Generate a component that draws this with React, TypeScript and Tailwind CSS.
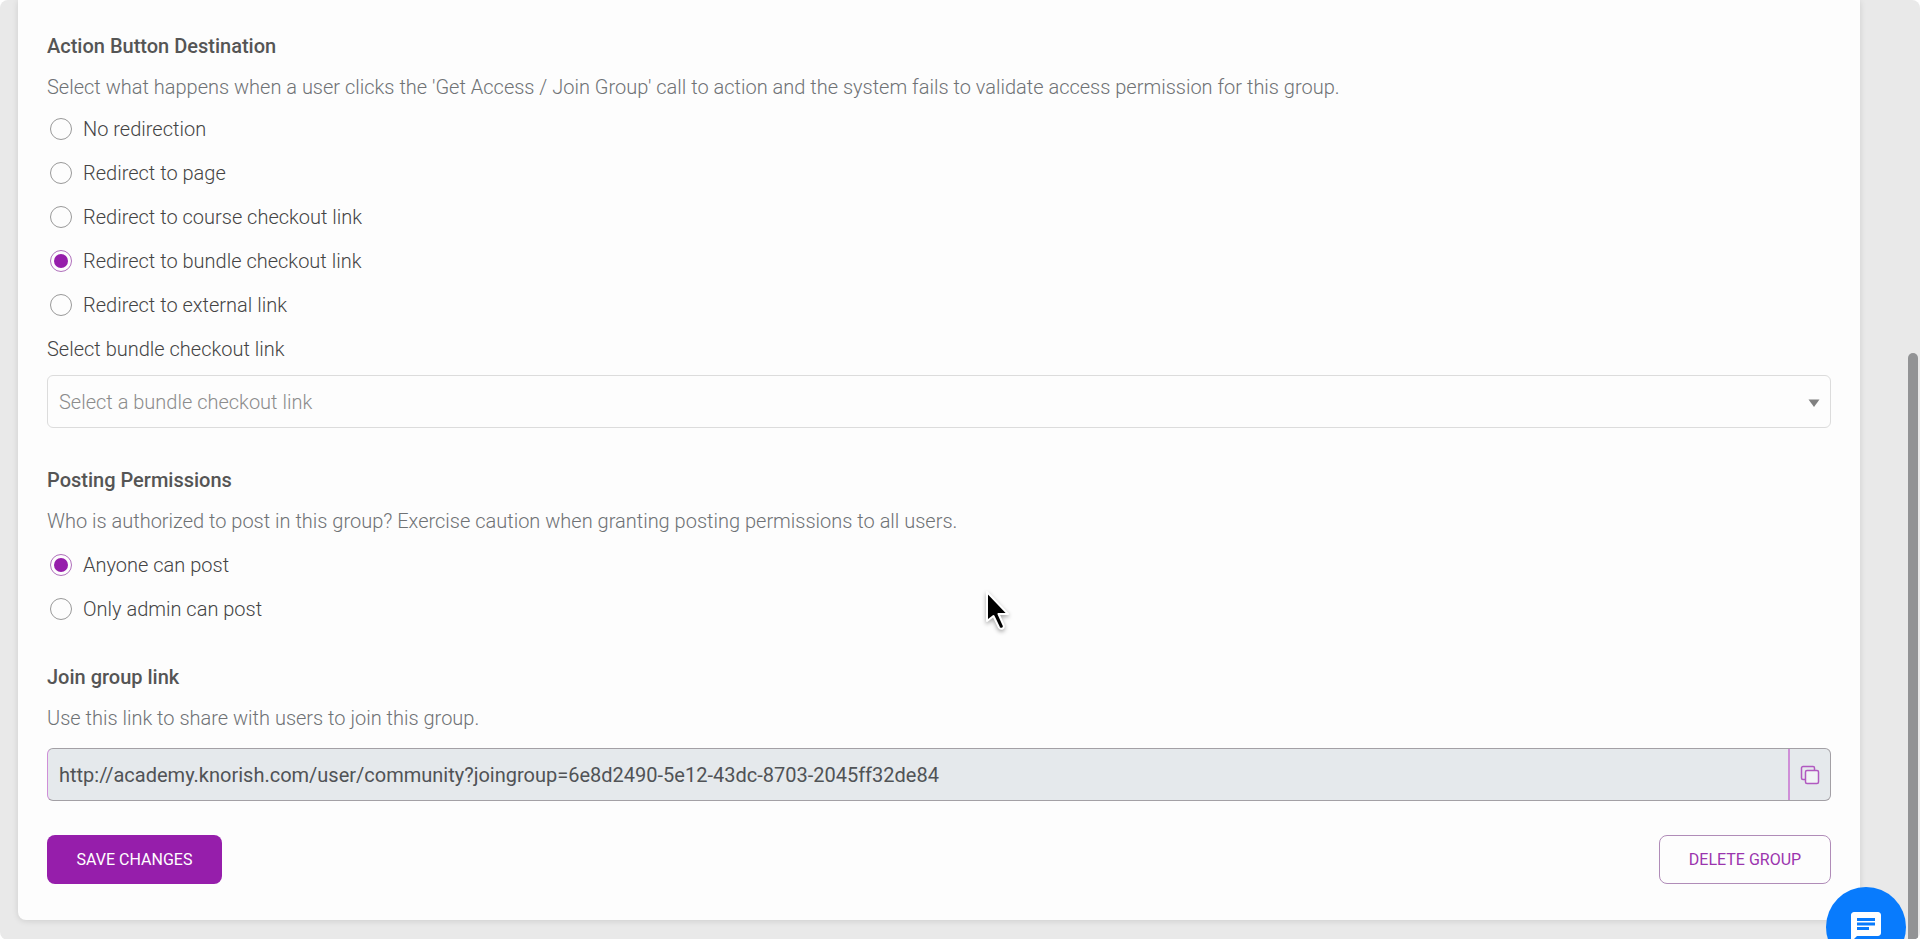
/**
 * GroupSettings page
 * Lower part of the community group form: button destination,
 * posting permissions and the join link
 */

import React, { useState } from 'react'
import { MdChat } from 'react-icons/md'

interface Option {
  value: string
  label: string
}

interface RadioListProps {
  name: string
  legend: string
  options: Option[]
  selected: string
  onSelect: (value: string) => void
}

const destinations: Option[] = [
  { value: 'none', label: 'No redirection' },
  { value: 'page', label: 'Redirect to page' },
  { value: 'course', label: 'Redirect to course checkout link' },
  { value: 'bundle', label: 'Redirect to bundle checkout link' },
  { value: 'external', label: 'Redirect to external link' }
]

const permissions: Option[] = [
  { value: 'anyone', label: 'Anyone can post' },
  { value: 'admin', label: 'Only admin can post' }
]

const joinLink =
  'http://academy.knorish.com/user/community?joingroup=6e8d2490-5e12-43dc-8703-2045ff32de84'

function SectionHeader({ title, text }: { title: string; text: string }) {
  return (
    <div className="space-y-[13px]">
      <h2 className="text-[20px] leading-7 font-medium text-[#555]">{title}</h2>
      <p className="text-[20px] leading-7 font-light text-[#6f7275]">{text}</p>
    </div>
  )
}

function RadioList({ name, legend, options, selected, onSelect }: RadioListProps) {
  return (
    <div role="radiogroup" aria-label={legend} className="flex flex-col items-start">
      {options.map((option) => (
        <label
          key={option.value}
          className="flex items-center gap-[11px] h-11 pl-[3px] text-[20px] leading-7 font-light text-[#444] cursor-pointer"
        >
          <input
            type="radio"
            name={name}
            value={option.value}
            checked={selected === option.value}
            onChange={() => onSelect(option.value)}
            className="appearance-none grid place-content-center size-[22px] rounded-full border border-[#999] checked:border-[#b070bc] before:size-[14px] before:rounded-full checked:before:bg-[#961eab]"
          />
          {option.label}
        </label>
      ))}
    </div>
  )
}

function CopyIcon() {
  return (
    <svg width="20" height="20" viewBox="0 0 20 20" fill="none" stroke="#b159c0" strokeWidth="1.5">
      <path d="M5.500 14.500H3A1.500 1.500 0 0 1 1.500 13V3A1.500 1.500 0 0 1 3 1.500H13A1.500 1.500 0 0 1 14.500 3V5.500" />
      <rect x="5.500" y="5.500" width="13" height="13" rx="1.500" fill="#f1f3f5" />
    </svg>
  )
}

function Pointer() {
  return (
    <svg
      className="absolute left-[982px] top-[587px] pointer-events-none drop-shadow-[0_2px_2px_rgba(0,0,0,0.35)]"
      width="32"
      height="46"
      viewBox="0 0 32 46"
    >
      <path
        d="M5 5V34L11.5 29L17 40.500Q18.500 42.500 20.500 41.500Q22.500 40.500 21.500 38L16.500 27H26Z"
        fill="#000"
        stroke="#fff"
        strokeWidth="2"
        strokeLinejoin="round"
      />
    </svg>
  )
}

export default function App() {
  const [destination, setDestination] = useState('bundle')
  const [permission, setPermission] = useState('anyone')

  const copyLink = () => {
    navigator.clipboard?.writeText(joinLink)
  }

  return (
    <div className="relative min-h-screen overflow-hidden rounded-lg bg-[#e9e9e9] pl-[18px] pr-[60px] pb-5 font-['Roboto',sans-serif]">
      <main className="bg-[#fdfdfd] rounded-b-lg shadow-[0_1px_6px_rgba(0,0,0,0.12)] px-[29px] pt-8 pb-9">
        {/* Action button destination */}
        <section>
          <SectionHeader
            title="Action Button Destination"
            text="Select what happens when a user clicks the 'Get Access / Join Group' call to action and the system fails to validate access permission for this group."
          />
          <div className="mt-1.5 mb-2">
            <RadioList
              name="destination"
              legend="Action Button Destination"
              options={destinations}
              selected={destination}
              onSelect={setDestination}
            />
          </div>
          <label htmlFor="bundle-link" className="block text-[20px] leading-7 font-light text-[#444]">
            Select bundle checkout link
          </label>
          <div className="relative mt-3">
            <select
              id="bundle-link"
              className="appearance-none block w-full h-[53px] px-[11px] rounded-md border border-[#dcdcdc] bg-transparent text-[20px] font-light text-[#8c8c8c]"
            >
              <option>Select a bundle checkout link</option>
            </select>
            <svg
              className="absolute right-[11px] top-6 pointer-events-none"
              width="12"
              height="8"
              viewBox="0 0 12 8"
            >
              <path d="M0.500 0.500H11.500L6 8Z" fill="#808080" />
            </svg>
          </div>
        </section>

        {/* Posting permissions */}
        <section className="mt-[38px]">
          <SectionHeader
            title="Posting Permissions"
            text="Who is authorized to post in this group? Exercise caution when granting posting permissions to all users."
          />
          <div className="mt-2">
            <RadioList
              name="permission"
              legend="Posting Permissions"
              options={permissions}
              selected={permission}
              onSelect={setPermission}
            />
          </div>
        </section>

        {/* Join link */}
        <section className="mt-8">
          <SectionHeader title="Join group link" text="Use this link to share with users to join this group." />
          <div className="mt-4 flex h-[53px] rounded-md border border-[#a3a0a5] border-l-[#cf8fd8] bg-[#e5e9ec] overflow-hidden">
            <input
              type="text"
              readOnly
              aria-label="Join group link"
              value={joinLink}
              className="flex-1 min-w-0 px-[11px] bg-transparent text-[20px] text-[#505356] outline-none"
            />
            <button
              type="button"
              aria-label="Copy link"
              onClick={copyLink}
              className="grid place-items-center w-[42px] border-l-2 border-[#cf8fd8]"
            >
              <CopyIcon />
            </button>
          </div>
        </section>

        {/* Form actions */}
        <div className="mt-[34px] flex justify-between">
          <button
            type="button"
            className="h-[49px] w-[175px] rounded-lg bg-[#961eab] text-[16px] text-white"
          >
            SAVE CHANGES
          </button>
          <button
            type="button"
            className="h-[49px] w-[172px] rounded-lg border border-[#b08cb8] text-[16px] text-[#9b35ae]"
          >
            DELETE GROUP
          </button>
        </div>
      </main>

      {/* Scroll thumb */}
      <div className="absolute right-[2px] top-[353px] bottom-0 w-[10px] rounded-t-full bg-[#929395]" />

      {/* Chat launcher */}
      <button
        type="button"
        aria-label="Open chat"
        className="absolute right-[14px] -bottom-[27px] grid place-items-center size-20 rounded-full bg-[#087bfd] text-white"
      >
        <MdChat size={36} />
      </button>

      <Pointer />
    </div>
  )
}
